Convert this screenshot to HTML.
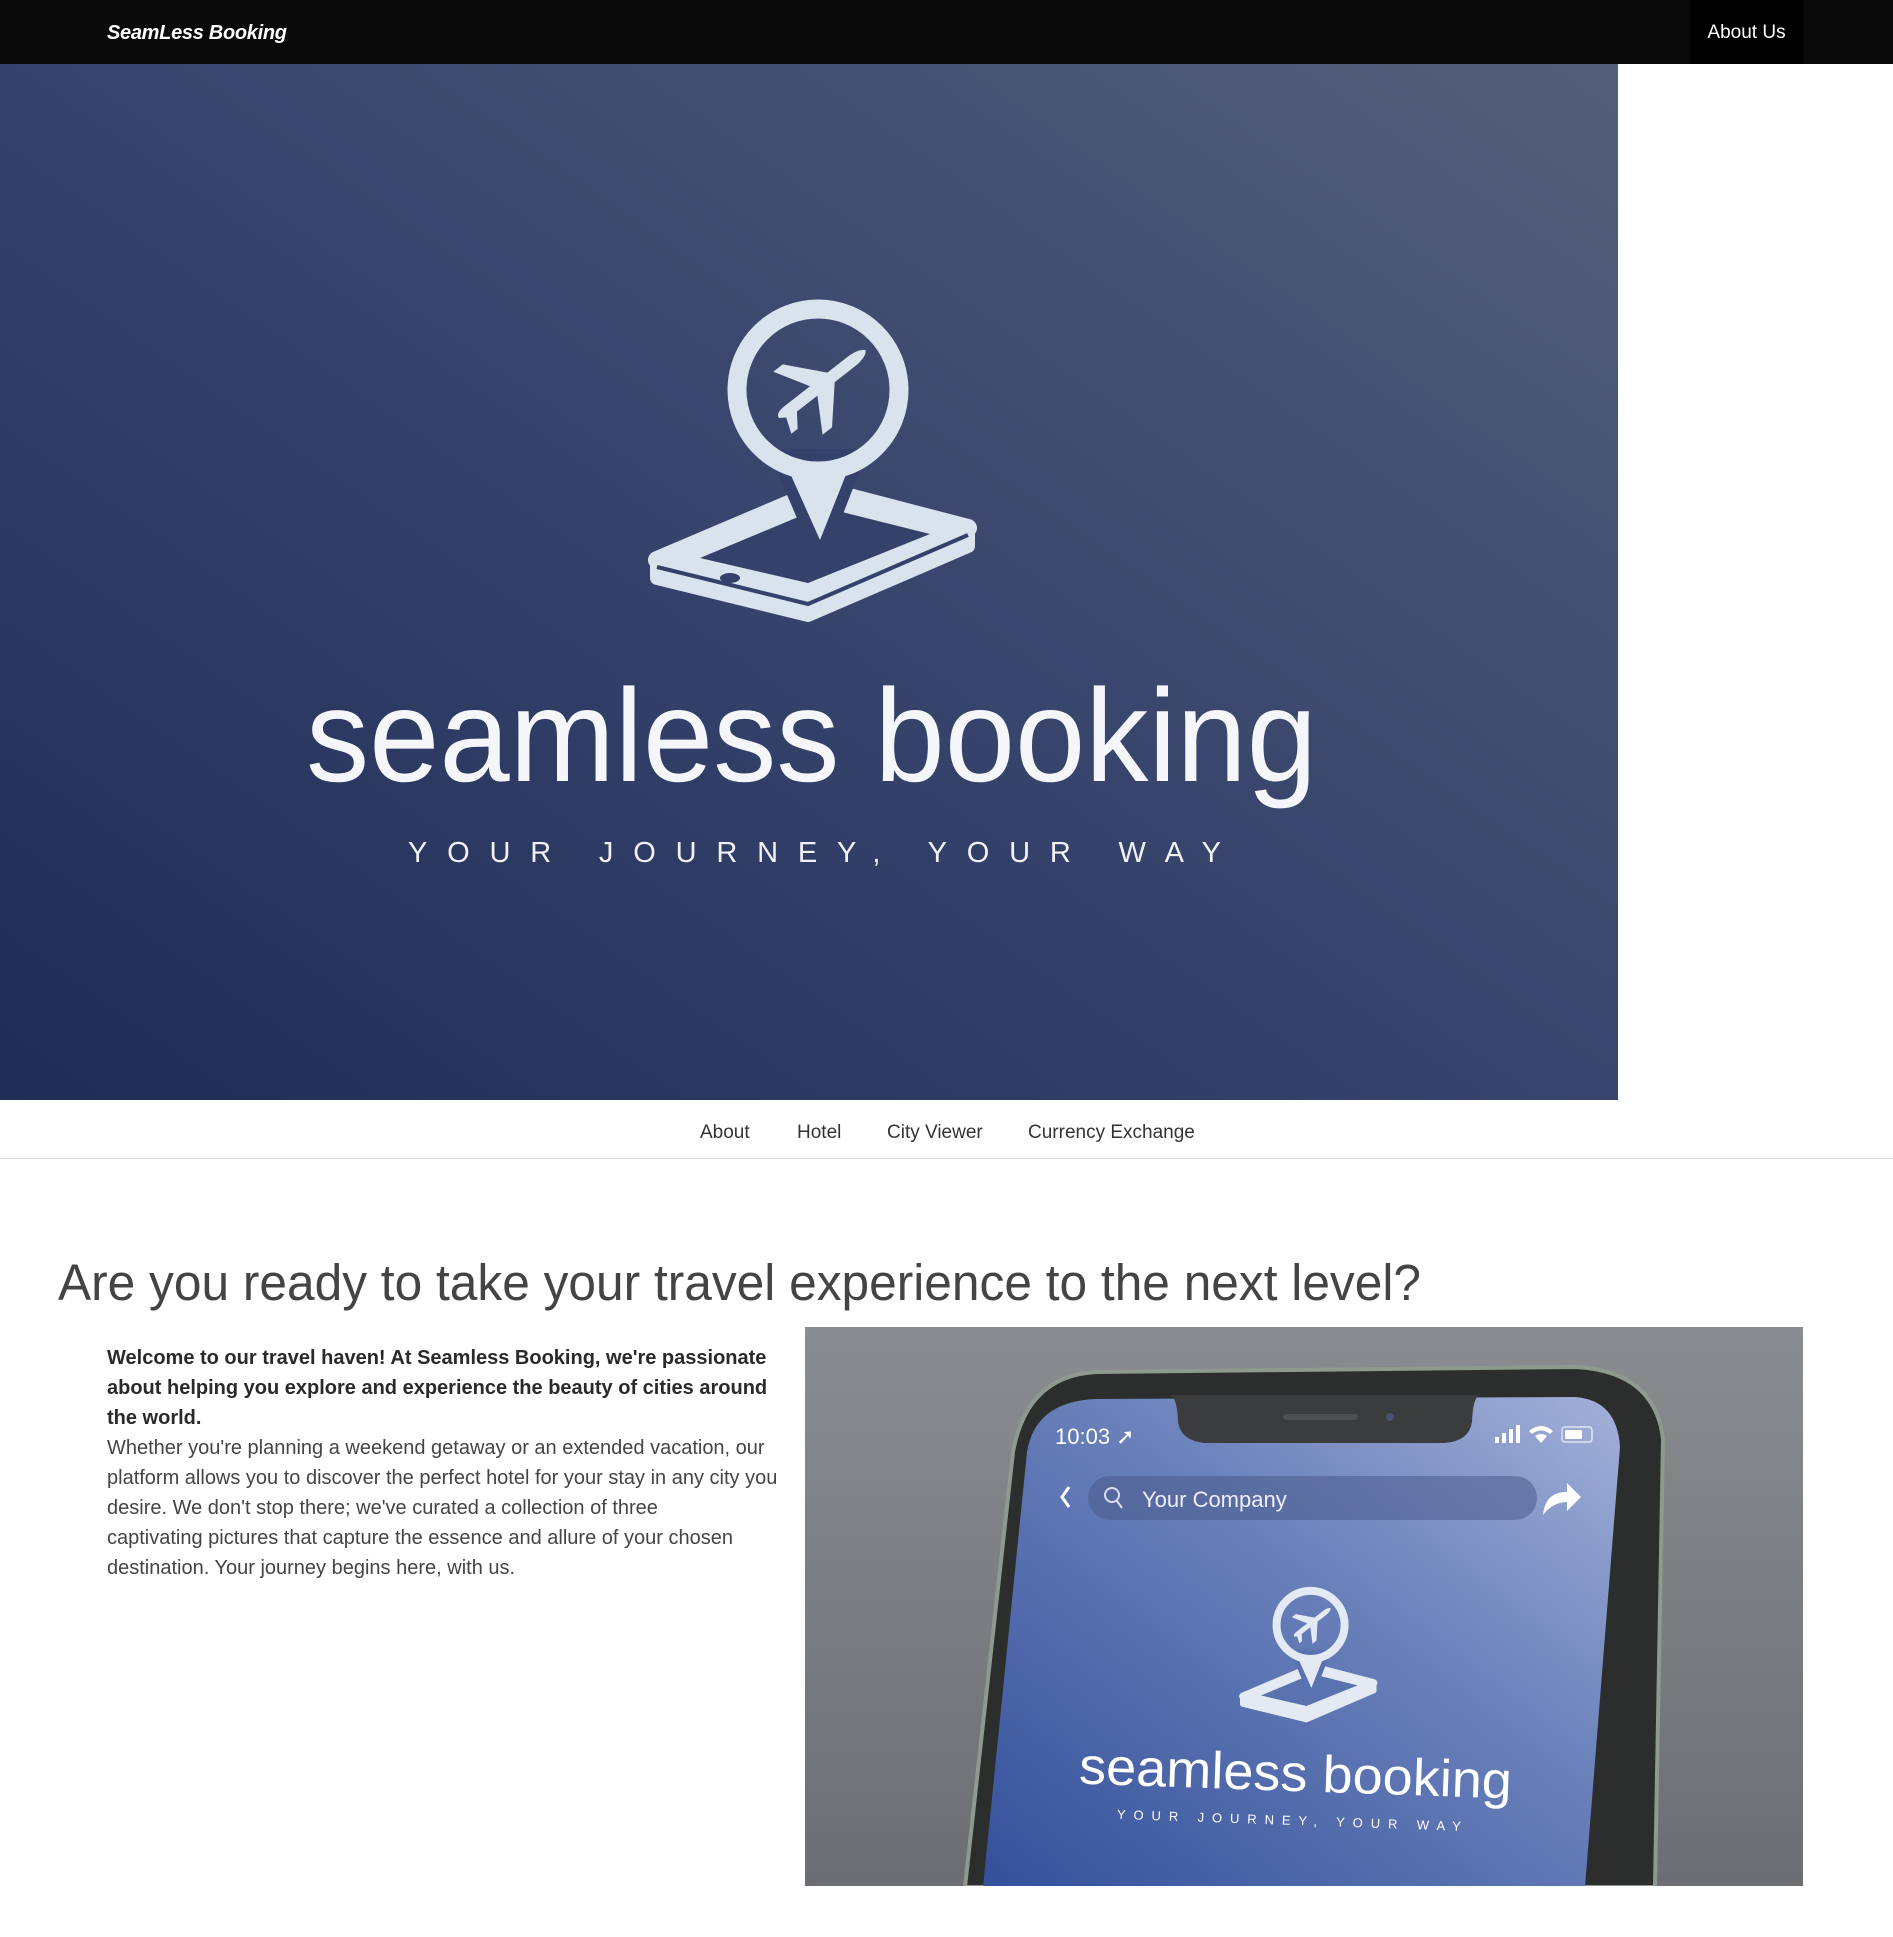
<!DOCTYPE html>
<html><head><meta charset="utf-8">
<style>
html,body{margin:0;padding:0;background:#fff;}
body{width:1893px;height:1937px;position:relative;overflow:hidden;font-family:"Liberation Sans",sans-serif;}
.nav{position:absolute;left:0;top:0;width:1893px;height:64px;background:#0a0a0a;}
.brand{position:absolute;left:107px;top:22px;color:#fff;font-weight:bold;font-style:italic;font-size:20px;letter-spacing:-0.3px;}
.about{position:absolute;left:1690px;top:0;width:113px;height:64px;background:#000;color:#fff;font-size:19px;line-height:66px;text-align:center;}
.hero{position:absolute;left:0;top:64px;width:1618px;height:1036px;background:linear-gradient(35deg,#1f2d55 0%,#34416a 45%,#545f7a 100%);}
.lnk{position:absolute;top:1122px;font-size:19px;color:#333;}
.rule{position:absolute;left:0;top:1158px;width:1893px;height:1px;background:#dcdcdc;}
.p{position:absolute;left:107px;top:1343px;width:700px;font-size:20px;line-height:30px;color:#444;white-space:nowrap;}
.p b{color:#2a2a2a;}
</style></head><body>
<div class="nav"><div class="brand">SeamLess Booking</div><div class="about">About Us</div></div>
<div class="hero">
<svg width="1618" height="1036" viewBox="0 0 1618 1036">
<g fill="#d9e3ee">
 <polygon points="657,496 822,426 968,464 808,533" stroke="#d9e3ee" stroke-width="18" stroke-linejoin="round"/>
 <polygon points="657,496 657,514 808,551 968,482 968,464 808,533" stroke="#d9e3ee" stroke-width="14" stroke-linejoin="round"/>
 <polyline points="657,503 808,540 968,471" fill="none" stroke="#34416a" stroke-width="4"/>
 <polygon points="700,494 822,443 930,470 808,519" fill="#34416a"/>
 <ellipse cx="730" cy="514" rx="10" ry="5" fill="#34416a"/>
 <polygon points="778,392 858,392 820,490" fill="#34416a" stroke="#34416a" stroke-width="14"/>
 <circle cx="818" cy="326" r="81" fill="none" stroke="#d9e3ee" stroke-width="19"/>
 <polygon points="785,398 851,398 820,476"/>
 <g transform="translate(820,322) rotate(-38)">
  <path d="M-52,0 Q-52,-6 -40,-6 L-8,-6 L-28,-40 L-16,-40 L14,-6 L42,-6 Q55,-5 58,0 Q55,5 42,6 L14,6 L-16,40 L-28,40 L-8,6 L-34,6 L-44,20 L-52,20 L-46,4 Z"/>
 </g>
</g>
<text x="306" y="717" font-size="132" fill="#f4f6f9" textLength="1011" lengthAdjust="spacingAndGlyphs" font-family="Liberation Sans,sans-serif">seamless booking</text>
<text x="408" y="798" font-size="29" fill="#f0f2f6" textLength="813" lengthAdjust="spacing" font-family="Liberation Sans,sans-serif">YOUR JOURNEY, YOUR WAY</text>
</svg>
</div>
<span class="lnk" style="left:700px">About</span>
<span class="lnk" style="left:797px">Hotel</span>
<span class="lnk" style="left:887px">City Viewer</span>
<span class="lnk" style="left:1028px">Currency Exchange</span>
<div class="rule"></div>
<svg style="position:absolute;left:0;top:1240px" width="1893" height="80">
<text x="58" y="60" font-size="51" fill="#444" textLength="1363" lengthAdjust="spacingAndGlyphs" font-family="Liberation Sans,sans-serif">Are you ready to take your travel experience to the next level?</text>
</svg>
<div class="p"><b>Welcome to our travel haven! At Seamless Booking, we're passionate<br>about helping you explore and experience the beauty of cities around<br>the world.</b><br>Whether you're planning a weekend getaway or an extended vacation, our<br>platform allows you to discover the perfect hotel for your stay in any city you<br>desire. We don't stop there; we've curated a collection of three<br>captivating pictures that capture the essence and allure of your chosen<br>destination. Your journey begins here, with us.</div>
<svg style="position:absolute;left:805px;top:1327px" width="998" height="559" viewBox="0 0 998 559">
<defs>
<linearGradient id="bg" x1="0" y1="0" x2="0" y2="1"><stop offset="0" stop-color="#8a8d90"/><stop offset="1" stop-color="#6c6e72"/></linearGradient>
<linearGradient id="scr" x1="0" y1="1" x2="1" y2="0"><stop offset="0" stop-color="#34509a"/><stop offset="0.6" stop-color="#6b82bb"/><stop offset="1" stop-color="#a3b0d8"/></linearGradient>
</defs>
<rect width="998" height="559" fill="url(#bg)"/>
<path d="M160,560 L208,125 Q222,48 292,45 L770,40 Q850,44 858,112 L850,560 Z" fill="#2b2e2d" stroke="#8e9a8f" stroke-width="4"/>
<path d="M178,560 L222,125 Q230,75 290,72 L770,70 Q812,73 815,120 L780,560 Z" fill="url(#scr)"/>
<path d="M364,68 Q372,68 373,95 Q376,114 400,116 L640,116 Q664,114 667,95 Q668,68 676,68 Z" fill="#3b3c3e"/>
<rect x="478" y="87" width="75" height="6" rx="3" fill="#4e4f52"/>
<circle cx="585" cy="90" r="4" fill="#4a5270"/>
<text x="250" y="117" font-size="22" fill="#fff" font-family="Liberation Sans,sans-serif">10:03 ➚</text>
<g fill="#fff"><rect x="690" y="110" width="4" height="6"/><rect x="697" y="106" width="4" height="10"/><rect x="704" y="102" width="4" height="14"/><rect x="711" y="98" width="4" height="18"/>
<path d="M724,104 Q736,94 748,104 L745,107 Q736,100 727,107 Z M736,116 L730,109 Q736,105 742,109 Z"/>
<rect x="757" y="100" width="30" height="15" rx="3" fill="none" stroke="#fff" stroke-width="1.5" opacity="0.7"/><rect x="760" y="103" width="17" height="9" rx="1"/></g>
<rect x="283" y="149" width="449" height="44" rx="22" fill="#4b5b8c" opacity="0.55"/>
<circle cx="307" cy="168" r="7" fill="none" stroke="#dde" stroke-width="2"/><path d="M312,174 L317,181" stroke="#dde" stroke-width="2"/>
<text x="337" y="180" font-size="22" fill="#eef" font-family="Liberation Sans,sans-serif">Your Company</text>
<path d="M264,160 L257,170 L264,180" fill="none" stroke="#fff" stroke-width="3"/>
<path d="M738,188 Q740,165 762,165 L762,156 L776,170 L762,184 L762,175 Q748,175 738,188 Z" fill="#fff"/>
<g transform="translate(162,161) scale(0.42)" fill="#e4eaf3">
 <polygon points="657,496 822,426 968,464 808,533" stroke="#e4eaf3" stroke-width="18" stroke-linejoin="round"/>
 <polygon points="657,496 657,514 808,551 968,482 968,464 808,533" stroke="#e4eaf3" stroke-width="14" stroke-linejoin="round"/>
 <polygon points="700,494 822,443 930,470 808,519" fill="#5b72b0"/>
 <polygon points="778,392 858,392 820,490" fill="#5b72b0" stroke="#5b72b0" stroke-width="14"/>
 <circle cx="818" cy="326" r="81" fill="none" stroke="#e4eaf3" stroke-width="19"/>
 <polygon points="785,398 851,398 820,476"/>
 <g transform="translate(820,322) rotate(-38)"><path d="M-52,0 Q-52,-6 -40,-6 L-8,-6 L-28,-40 L-16,-40 L14,-6 L42,-6 Q55,-5 58,0 Q55,5 42,6 L14,6 L-16,40 L-28,40 L-8,6 L-34,6 L-44,20 L-52,20 L-46,4 Z"/></g>
</g>
<text x="274" y="464" font-size="52" fill="#fff" textLength="433" lengthAdjust="spacingAndGlyphs" font-family="Liberation Sans,sans-serif" transform="rotate(2 490 450)">seamless booking</text>
<text x="312" y="498" font-size="13" fill="#fff" textLength="344" lengthAdjust="spacing" font-family="Liberation Sans,sans-serif" transform="rotate(2 490 490)">YOUR JOURNEY, YOUR WAY</text>
</svg>
</body></html>
